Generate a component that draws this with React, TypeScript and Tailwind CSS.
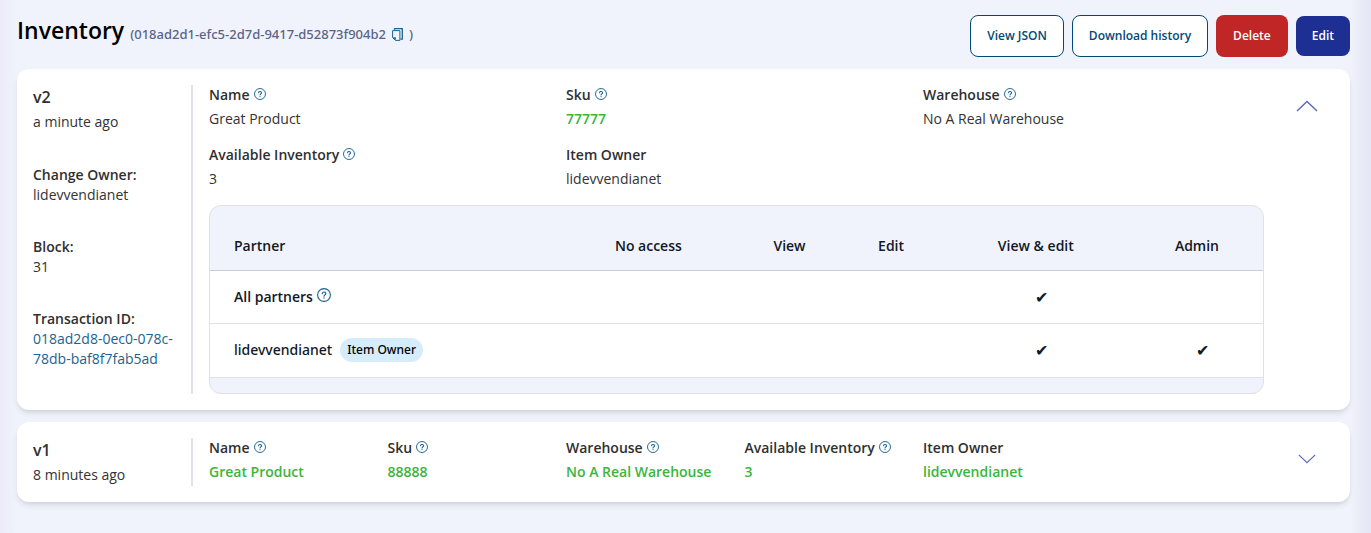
import { useState } from "react";
import type { ReactNode } from "react";

type FieldData = { label: string; value: string; help?: boolean; changed?: boolean };

function HelpIcon({ large = false }: { large?: boolean }) {
  return (
    <svg
      viewBox="0 0 14 14"
      className={large ? "size-[14px] shrink-0" : "size-3 shrink-0"}
      fill="none"
      stroke="#1a6390"
      aria-hidden="true"
    >
      <circle cx="7" cy="7" r="6.4" strokeWidth="1.1" />
      <path d="M5.3 5.6a1.75 1.6 0 1 1 2.6 1.4c-.6.35-.9.6-.9 1.2" strokeWidth="1.2" strokeLinecap="round" />
      <circle cx="7" cy="10" r=".7" fill="#1a6390" stroke="none" />
    </svg>
  );
}

function CopyIcon() {
  return (
    <svg viewBox="0 0 11 13" className="h-[13px] w-[11px]" fill="none" stroke="#1a6390" aria-hidden="true">
      <path d="M2.5 1.8V.7h7.8v10.5H8.4" strokeWidth="1.3" />
      <path d="M.6 2.6h7.3v9.8H3.4L.6 9.6z" strokeWidth="1" />
      <path d="M.8 9.2h3v3z" fill="#1a6390" stroke="none" />
    </svg>
  );
}

function Chevron({ open }: { open: boolean }) {
  return (
    <svg viewBox="0 0 22 12" className={open ? "h-3 w-[22px]" : "h-[10px] w-[18px]"} fill="none" stroke="#5c66b8" strokeWidth="1.4" aria-hidden="true">
      <path d={open ? "M1 11 11 1.5 21 11" : "M1 1 11 10.5 21 1"} />
    </svg>
  );
}

function Field({ label, value, help, changed }: FieldData) {
  return (
    <div>
      <dt className="flex h-5 items-center gap-1 font-semibold whitespace-nowrap text-[#2f2f2f]">
        {label}
        {help && (
          <span className="pb-[2px]">
            <HelpIcon />
          </span>
        )}
      </dt>
      <dd className={changed ? "mt-1 font-semibold whitespace-nowrap text-[#3bb53b]" : "mt-1 whitespace-nowrap text-[#333333]"}>{value}</dd>
    </div>
  );
}

function Meta({ label, children }: { label: string; children: ReactNode }) {
  return (
    <div>
      <dt className="font-semibold text-[#2f2f2f]">{label}</dt>
      <dd>{children}</dd>
    </div>
  );
}

const partners = [
  { name: "All partners", all: true, access: [false, false, false, true, false] },
  { name: "lidevvendianet", all: false, access: [false, false, false, true, true] },
];

function AccessTable() {
  return (
    <div className="mt-4 overflow-hidden rounded-xl border border-[#dfe1e8] bg-[#f0f3fb] pb-[15px]">
      <table className="w-full table-fixed border-collapse text-[#111827]">
        <colgroup>
          <col className="w-[34.3%]" />
          <col className="w-[15.8%]" />
          <col className="w-[11%]" />
          <col className="w-[8.3%]" />
          <col className="w-[19.2%]" />
          <col className="w-[11.4%]" />
        </colgroup>
        <thead>
          <tr className="h-16 border-b border-[#c9cdd6]">
            <th className="pt-4 pl-6 text-left font-semibold">Partner</th>
            {["No access", "View", "Edit", "View & edit", "Admin"].map((h) => (
              <th key={h} className="pt-4 pr-3 text-center font-semibold">{h}</th>
            ))}
          </tr>
        </thead>
        <tbody className="bg-white">
          {partners.map((p) => (
            <tr key={p.name} className={p.all ? "h-[53px] border-b border-[#dfe1e8]" : "h-[54px] border-b border-[#dfe1e8]"}>
              <td className="pl-6">
                {p.all ? (
                  <span className="flex items-center gap-1 font-semibold">
                    {p.name}
                    <span className="pb-1">
                      <HelpIcon large />
                    </span>
                  </span>
                ) : (
                  <span className="flex items-center gap-2 font-['Noto_Sans',sans-serif] font-medium">
                    {p.name}
                    <span className="rounded-full bg-[#d5edfa] px-[7px] py-1 text-xs leading-4 text-black">Item Owner</span>
                  </span>
                )}
              </td>
              {p.access.map((on, i) => (
                <td key={i} className="text-center text-base leading-5">{on ? "✔" : ""}</td>
              ))}
            </tr>
          ))}
        </tbody>
      </table>
    </div>
  );
}

function VersionCard(props: {
  version: string;
  age: string;
  fields: FieldData[];
  open: boolean;
  onToggle: () => void;
  meta?: ReactNode;
  children?: ReactNode;
}) {
  const { version, age, fields, open, onToggle, meta, children } = props;
  return (
    <section className="flex rounded-xl bg-white p-4 shadow-md">
      <div className="w-40 shrink-0 border-r-2 border-[#e0e1e8]">
        <h2 className="text-base leading-6 font-semibold text-[#2f2f2f]">{version}</h2>
        <p className="mt-[3px] pb-px text-[#333333]">{age}</p>
        {meta}
      </div>
      <div className="min-w-0 grow pl-4">
        <dl className={open ? "grid grid-cols-3 gap-4" : "grid grid-cols-6 gap-4"}>
          {fields.map((f) => (
            <Field key={f.label} {...f} />
          ))}
        </dl>
        {children}
      </div>
      <div className="w-[70px] shrink-0 pt-2 pl-[27px]">
        <button type="button" onClick={onToggle} aria-expanded={open} aria-label={`Toggle ${version}`} className="flex h-[26px] w-8 items-center justify-center">
          <Chevron open={open} />
        </button>
      </div>
    </section>
  );
}

export default function App() {
  const [v2Open, setV2Open] = useState(true);
  const [v1Open, setV1Open] = useState(false);
  const outline = "h-[42px] rounded-lg border border-[#004b76] bg-white px-4 text-[#004b76]";

  return (
    <main className="min-h-screen bg-[linear-gradient(to_right,#ebebf7_0,#f0f3fb_16px,#f0f3fb_calc(100%-20px),#e2e5f4_100%)] pt-[15px] pr-[21px] pb-8 pl-[17px] font-['Open_Sans',sans-serif] text-sm leading-5">
      <header className="flex items-start justify-between gap-4">
        <h1 className="flex items-baseline gap-[6px] text-[23px] leading-[30px] font-semibold text-black">
          Inventory
          <span className="flex items-center font-['Noto_Sans',sans-serif] text-[13px] leading-5 font-medium text-[#5a6488]">
            (018ad2d1-efc5-2d7d-9417-d52873f904b2
            <button type="button" aria-label="Copy ID" className="mx-[6px]">
              <CopyIcon />
            </button>
            )
          </span>
        </h1>
        <div className="flex items-center gap-2 text-xs font-semibold whitespace-nowrap">
          <button type="button" className={outline}>View JSON</button>
          <button type="button" className={outline}>Download history</button>
          <button type="button" className="h-[42px] rounded-lg bg-[#c02626] px-[17px] text-white">Delete</button>
          <button type="button" className="h-10 rounded-lg bg-[#1e2f93] px-4 text-white">Edit</button>
        </div>
      </header>

      <div className="mt-3 flex flex-col gap-3">
        <VersionCard
          version="v2"
          age="a minute ago"
          open={v2Open}
          onToggle={() => setV2Open(!v2Open)}
          fields={[
            { label: "Name", value: "Great Product", help: true },
            { label: "Sku", value: "77777", help: true, changed: true },
            { label: "Warehouse", value: "No A Real Warehouse", help: true },
            { label: "Available Inventory", value: "3", help: true },
            { label: "Item Owner", value: "lidevvendianet" },
          ]}
          meta={
            v2Open && (
              <dl className="mt-8 flex flex-col gap-8 text-[#333333]">
                <Meta label="Change Owner:">lidevvendianet</Meta>
                <Meta label="Block:">31</Meta>
                <Meta label="Transaction ID:">
                  <a href="#transaction" className="text-[#1a6390]">018ad2d8-0ec0-078c-78db-baf8f7fab5ad</a>
                </Meta>
              </dl>
            )
          }
        >
          {v2Open && <AccessTable />}
        </VersionCard>
        <VersionCard
          version="v1"
          age="8 minutes ago"
          open={v1Open}
          onToggle={() => setV1Open(!v1Open)}
          fields={[
            { label: "Name", value: "Great Product", help: true, changed: true },
            { label: "Sku", value: "88888", help: true, changed: true },
            { label: "Warehouse", value: "No A Real Warehouse", help: true, changed: true },
            { label: "Available Inventory", value: "3", help: true, changed: true },
            { label: "Item Owner", value: "lidevvendianet", changed: true },
          ]}
        />
      </div>
    </main>
  );
}
